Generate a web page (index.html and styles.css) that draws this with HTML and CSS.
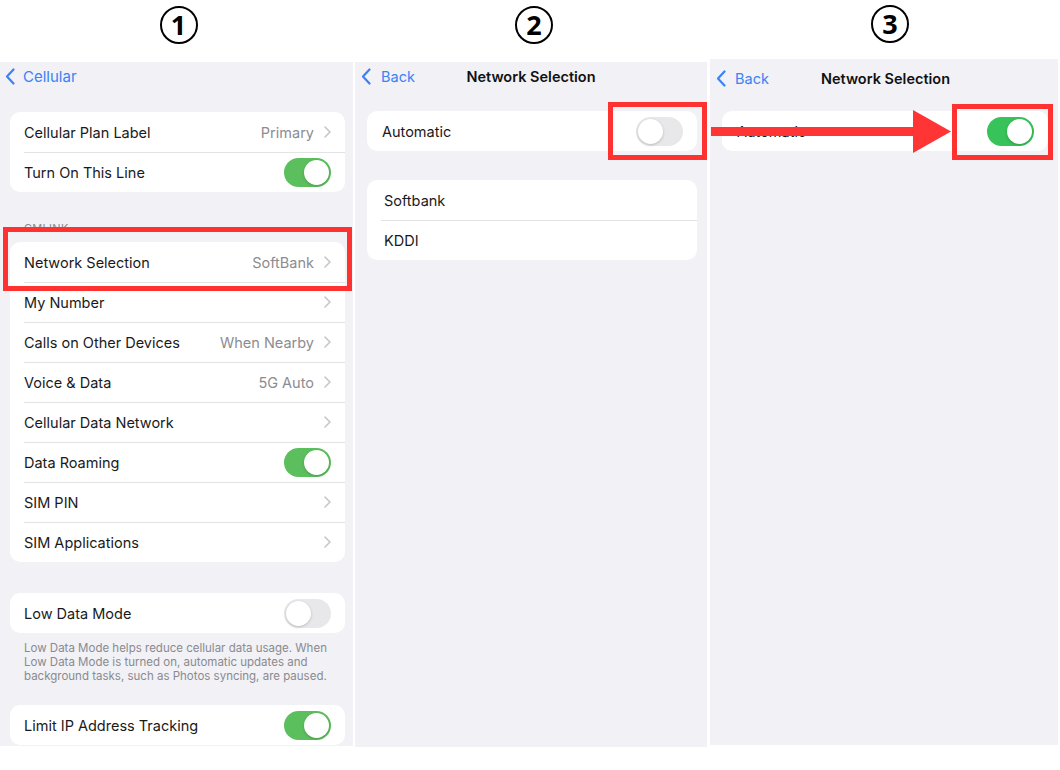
FILE: index.html
```html
<!DOCTYPE html>
<html>
<head>
<meta charset="utf-8">
<link rel="stylesheet" href="styles.css">
</head>
<body>
<div class="stage">
  <section class="col col1">
    <div class="num"><span class="circ">1</span></div>
    <div class="screen s1">
      <div class="nav">
        <svg class="back" viewBox="0 0 10 17" width="10" height="17"><path d="M8.5 1.5 L2 8.5 L8.5 15.5" fill="none" stroke="#3a82f6" stroke-width="2.2" stroke-linecap="round" stroke-linejoin="round"/></svg>
        <span class="backtxt">Cellular</span>
      </div>
      <div class="card c1a">
        <div class="row"><span class="lbl">Cellular Plan Label</span><span class="val">Primary</span><svg class="chev" viewBox="0 0 7 12" width="7" height="12"><path d="M1 1 L6 6 L1 11" fill="none" stroke="#c4c4c7" stroke-width="1.5" stroke-linecap="round" stroke-linejoin="round"/></svg></div>
        <div class="row"><span class="lbl">Turn On This Line</span><span class="tog on"><span class="knob"></span></span></div>
      </div>
      <div class="sechead">CMLINK</div>
      <div class="card c1b">
        <div class="row"><span class="lbl">Network Selection</span><span class="val">SoftBank</span><svg class="chev" viewBox="0 0 7 12" width="7" height="12"><path d="M1 1 L6 6 L1 11" fill="none" stroke="#c4c4c7" stroke-width="1.5" stroke-linecap="round" stroke-linejoin="round"/></svg></div>
        <div class="row"><span class="lbl">My Number</span><svg class="chev" viewBox="0 0 7 12" width="7" height="12"><path d="M1 1 L6 6 L1 11" fill="none" stroke="#c4c4c7" stroke-width="1.5" stroke-linecap="round" stroke-linejoin="round"/></svg></div>
        <div class="row"><span class="lbl">Calls on Other Devices</span><span class="val">When Nearby</span><svg class="chev" viewBox="0 0 7 12" width="7" height="12"><path d="M1 1 L6 6 L1 11" fill="none" stroke="#c4c4c7" stroke-width="1.5" stroke-linecap="round" stroke-linejoin="round"/></svg></div>
        <div class="row"><span class="lbl">Voice &amp; Data</span><span class="val">5G Auto</span><svg class="chev" viewBox="0 0 7 12" width="7" height="12"><path d="M1 1 L6 6 L1 11" fill="none" stroke="#c4c4c7" stroke-width="1.5" stroke-linecap="round" stroke-linejoin="round"/></svg></div>
        <div class="row"><span class="lbl">Cellular Data Network</span><svg class="chev" viewBox="0 0 7 12" width="7" height="12"><path d="M1 1 L6 6 L1 11" fill="none" stroke="#c4c4c7" stroke-width="1.5" stroke-linecap="round" stroke-linejoin="round"/></svg></div>
        <div class="row"><span class="lbl">Data Roaming</span><span class="tog on"><span class="knob"></span></span></div>
        <div class="row"><span class="lbl">SIM PIN</span><svg class="chev" viewBox="0 0 7 12" width="7" height="12"><path d="M1 1 L6 6 L1 11" fill="none" stroke="#c4c4c7" stroke-width="1.5" stroke-linecap="round" stroke-linejoin="round"/></svg></div>
        <div class="row"><span class="lbl">SIM Applications</span><svg class="chev" viewBox="0 0 7 12" width="7" height="12"><path d="M1 1 L6 6 L1 11" fill="none" stroke="#c4c4c7" stroke-width="1.5" stroke-linecap="round" stroke-linejoin="round"/></svg></div>
      </div>
      <div class="card c1c">
        <div class="row"><span class="lbl">Low Data Mode</span><span class="tog off"><span class="knob"></span></span></div>
      </div>
      <p class="foot">Low Data Mode helps reduce cellular data usage. When Low Data Mode is turned on, automatic updates and background tasks, such as Photos syncing, are paused.</p>
      <div class="card c1d">
        <div class="row"><span class="lbl">Limit IP Address Tracking</span><span class="tog on"><span class="knob"></span></span></div>
      </div>
      <div class="redbox rb1"></div>
    </div>
  </section>

  <section class="col col2">
    <div class="num"><span class="circ">2</span></div>
    <div class="screen s2">
      <div class="nav nav2">
        <svg class="back" viewBox="0 0 10 17" width="10" height="17"><path d="M8.5 1.5 L2 8.5 L8.5 15.5" fill="none" stroke="#3a82f6" stroke-width="2.2" stroke-linecap="round" stroke-linejoin="round"/></svg>
        <span class="backtxt">Back</span>
        <span class="title">Network Selection</span>
      </div>
      <div class="card c2a">
        <div class="row"><span class="lbl">Automatic</span><span class="tog off"><span class="knob"></span></span></div>
      </div>
      <div class="card c2b">
        <div class="row"><span class="lbl">Softbank</span></div>
        <div class="row"><span class="lbl">KDDI</span></div>
      </div>
      <div class="redbox rb2"></div>
    </div>
  </section>

  <section class="col col3">
    <div class="num"><span class="circ">3</span></div>
    <div class="screen s3">
      <div class="nav nav3">
        <svg class="back" viewBox="0 0 10 17" width="10" height="17"><path d="M8.5 1.5 L2 8.5 L8.5 15.5" fill="none" stroke="#3a82f6" stroke-width="2.2" stroke-linecap="round" stroke-linejoin="round"/></svg>
        <span class="backtxt">Back</span>
        <span class="title">Network Selection</span>
      </div>
      <div class="card c3a">
        <div class="row"><span class="lbl">Automatic</span><span class="tog on bright"><span class="knob"></span></span></div>
      </div>
      <div class="redbox rb3"></div>
    </div>
  </section>

  <svg class="arrow" viewBox="0 0 240 44" width="240" height="44">
    <rect x="0" y="17" width="204" height="9" fill="#ff3434"/>
    <polygon points="202,0 240,21.5 202,43" fill="#ff3434"/>
  </svg>
</div>
</body>
</html>
```

FILE: styles.css
```css
* { box-sizing: border-box; }
html, body { margin: 0; padding: 0; background: #fff; }
body {
  font-family: "Inter", "Liberation Sans", sans-serif;
  color: #111;
  width: 1060px;
  height: 770px;
  overflow: hidden;
}
.stage {
  position: relative;
  display: flex;
  width: 1060px;
  height: 770px;
}
.col {
  display: flex;
  flex-direction: column;
  flex: none;
}
.col1 { width: 353px; }
.col2 { width: 352px; margin-left: 2px; }
.col3 { width: 348px; margin-left: 3px; }

.num {
  height: 62px;
  display: flex;
  justify-content: center;
  padding-top: 6px;
}
.col1 .num { padding-left: 4px; }
.col2 .num { padding-left: 6px; }
.col3 .num { height: 59px; padding-top: 5px; padding-left: 12px; }
.circ {
  width: 38px;
  height: 38px;
  border: 2.5px solid #000;
  border-radius: 50%;
  display: flex;
  align-items: center;
  justify-content: center;
  font-family: "Noto Sans", "DejaVu Sans", sans-serif;
  font-weight: 700;
  font-size: 27px;
  line-height: 1;
  color: #000;
  padding-bottom: 1px;
}

.screen {
  position: relative;
  background: #f1f1f6;
  overflow: hidden;
}
.s1 { height: 684px; }
.s2 { height: 685px; }
.s3 { height: 686px; }

.nav {
  display: flex;
  align-items: center;
  height: 28px;
  padding-left: 5px;
  position: relative;
}
.nav2 { padding-left: 6px; }
.nav3 { padding-left: 6px; margin-top: 5px; }
.back { display: block; }
.backtxt {
  color: #3a82f6;
  font-size: 15px;
  margin-left: 8px;
}
.nav2 .backtxt, .nav3 .backtxt { margin-left: 10px; font-size: 14.5px; }
.nav3 .backtxt { margin-left: 9px; }
.title {
  position: absolute;
  left: 0; right: 0;
  text-align: center;
  font-weight: 600;
  font-size: 14.5px;
  pointer-events: none;
}
.nav3 .title { padding-left: 3px; }

.card {
  background: #fff;
  border-radius: 10px;
  margin: 0 8px 0 10px;
}
.row {
  display: flex;
  align-items: center;
  height: 40px;
  padding: 0 14px;
  position: relative;
}
.row + .row::before {
  content: "";
  position: absolute;
  top: 0;
  left: 14px;
  right: 0;
  height: 1px;
  background: #e3e3e6;
}
.lbl {
  font-size: 14.5px;
  flex: 1;
  white-space: nowrap;
  color: #1a1a1a;
}
.val {
  font-size: 14.5px;
  color: #8c8c90;
  margin-right: 10px;
}
.chev { display: block; }

.tog {
  width: 47px;
  height: 29px;
  border-radius: 15px;
  position: relative;
  flex: none;
}
.tog.on { background: #5cbf5e; }
.tog.on.bright { background: #37c25a; }
.tog.off { background: #e8e8ea; }
.knob {
  position: absolute;
  top: 2px;
  width: 25px;
  height: 25px;
  border-radius: 50%;
  background: #fff;
  box-shadow: 0 1px 3px rgba(0,0,0,0.2);
}
.tog.on .knob { right: 2px; }
.tog.off .knob { left: 2px; }

.c1a { margin-top: 22px; }
.sechead {
  font-size: 11px;
  color: #8c8c90;
  padding-left: 24px;
  margin-top: 29px;
  height: 21px;
  line-height: 14px;
  letter-spacing: 0.3px;
}
.c1c { margin-top: 31px; }
.foot {
  margin: 8px 14px 0 24px;
  font-size: 11.5px;
  line-height: 14px;
  color: #8a8a8e;
}
.c1d { margin-top: 22px; }

.c2a { margin: 21px 10px 0 12px; }
.c2a .row { padding-left: 15px; }
.c2b { margin: 29px 10px 0 12px; }
.c2b .row { padding-left: 17px; }

.c3a { margin: 19px 10px 0 12px; }
.c3a .row { padding-left: 15px; padding-right: 14px; }

.redbox {
  position: absolute;
  border: 5px solid #ff3232;
  background: transparent;
}
.rb1 { left: 3px; top: 165px; width: 349px; height: 64px; }
.rb2 { left: 253px; top: 40px; width: 99px; height: 58px; }
.rb3 { left: 242px; top: 45px; width: 101px; height: 56px; }

.arrow {
  position: absolute;
  left: 711px;
  top: 110px;
}
```
